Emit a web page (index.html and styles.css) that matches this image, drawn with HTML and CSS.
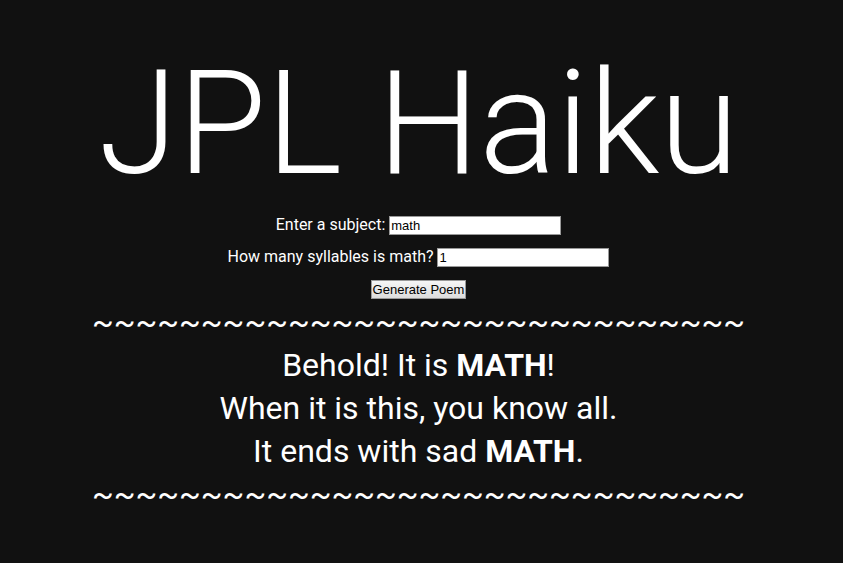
FILE: index.html
```html
<!DOCTYPE html>
<html lang="en">
<head>
<meta charset="utf-8">
<title>JPL Haiku</title>
<link rel="stylesheet" href="styles.css">
</head>
<body>
<main class="page">
<h1 class="title">JPL Haiku</h1>
<form class="form">
<div class="row"><label for="subject">Enter a subject:</label> <input class="field" id="subject" type="text" value="math"></div>
<div class="row"><label for="syllables">How many syllables is math?</label> <input class="field" id="syllables" type="text" value="1"></div>
<button class="generate" type="button">Generate Poem</button>
</form>
<section class="poem">
<p>~~~~~~~~~~~~~~~~~~~~~~~~~~~~~~</p>
<p>Behold! It is <b>MATH</b>!</p>
<p>When it is this, you know all.</p>
<p>It ends with sad <b>MATH</b>.</p>
<p>~~~~~~~~~~~~~~~~~~~~~~~~~~~~~~</p>
</section>
</main>
</body>
</html>
```
FILE: styles.css
```css
body {
  margin: 0;
  background: #111;
  color: #fff;
  font-family: Roboto, sans-serif;
  font-size: 16px;
}

.page {
  padding: 40px 6px 0 0;
  text-align: center;
}

.title {
  margin: 0 0 7px;
  font-size: 144px;
  font-weight: 300;
  line-height: 168px;
}

.form {
  height: 86px;
}

.row {
  height: 32px;
}

.field {
  box-sizing: border-box;
  width: 172px;
  height: 19px;
  padding: 1px;
  border: 1px solid #999;
  background: #fff;
  color: #000;
  font: 13px "Liberation Sans", sans-serif;
}

.generate {
  box-sizing: border-box;
  height: 19px;
  padding: 0 1px;
  border: 1px solid #999;
  background: linear-gradient(#f6f6f6, #dcdcdc);
  color: #000;
  font: 13px "Liberation Sans", sans-serif;
}

.poem {
  font-size: 32px;
  line-height: 43px;
}

.poem p {
  margin: 0;
}
```
